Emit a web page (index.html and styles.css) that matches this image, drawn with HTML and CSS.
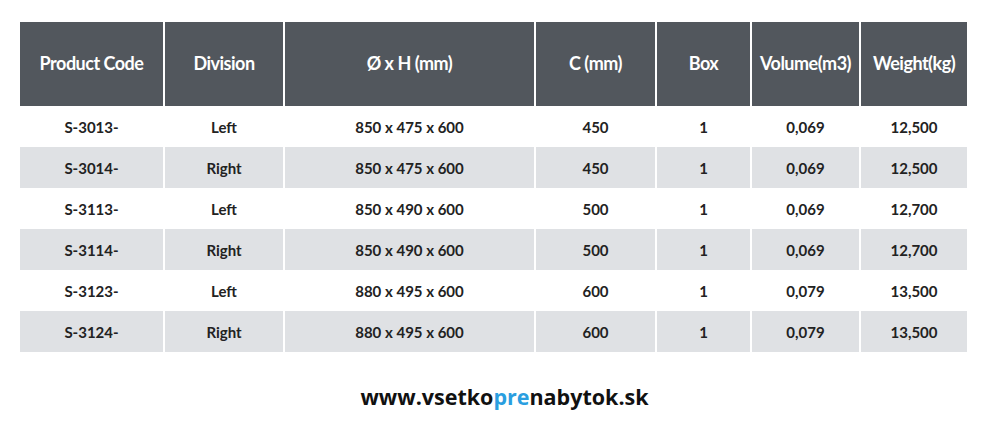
FILE: index.html
```html
<!DOCTYPE html>
<html>
<head>
<meta charset="utf-8">
<link rel="stylesheet" href="styles.css">
</head>
<body>
<div class="page">
  <table class="spec">
    <colgroup>
      <col class="c1"><col class="c2"><col class="c3"><col class="c4"><col class="c5"><col class="c6"><col class="c7">
    </colgroup>
    <thead>
      <tr>
        <th>Product Code</th>
        <th>Division</th>
        <th>Ø x H (mm)</th>
        <th>C (mm)</th>
        <th>Box</th>
        <th>Volume(m3)</th>
        <th>Weight(kg)</th>
      </tr>
    </thead>
    <tbody>
      <tr><td>S-3013-</td><td>Left</td><td>850 x 475 x 600</td><td>450</td><td>1</td><td>0,069</td><td>12,500</td></tr>
      <tr><td>S-3014-</td><td>Right</td><td>850 x 475 x 600</td><td>450</td><td>1</td><td>0,069</td><td>12,500</td></tr>
      <tr><td>S-3113-</td><td>Left</td><td>850 x 490 x 600</td><td>500</td><td>1</td><td>0,069</td><td>12,700</td></tr>
      <tr><td>S-3114-</td><td>Right</td><td>850 x 490 x 600</td><td>500</td><td>1</td><td>0,069</td><td>12,700</td></tr>
      <tr><td>S-3123-</td><td>Left</td><td>880 x 495 x 600</td><td>600</td><td>1</td><td>0,079</td><td>13,500</td></tr>
      <tr><td>S-3124-</td><td>Right</td><td>880 x 495 x 600</td><td>600</td><td>1</td><td>0,079</td><td>13,500</td></tr>
    </tbody>
  </table>
  <div class="site">www.vsetko<span class="accent">pre</span>nabytok.sk</div>
</div>
</body>
</html>
```

FILE: styles.css
```css
html, body {
  margin: 0;
  padding: 0;
  background: #ffffff;
}
.page {
  width: 1000px;
  height: 425px;
  padding-top: 22px;
  box-sizing: border-box;
}
.spec {
  margin-left: 20px;
  width: 947px;
  border-collapse: collapse;
  table-layout: fixed;
  font-family: Lato, "Liberation Sans", sans-serif;
  font-weight: 700;
}
.c1 { width: 144px; }
.c2 { width: 120px; }
.c3 { width: 251px; }
.c4 { width: 121px; }
.c5 { width: 95px; }
.c6 { width: 109px; }
.c7 { width: 107px; }
.spec th {
  background: #52575d;
  color: #ffffff;
  font-size: 18px;
  font-weight: 700;
  letter-spacing: -0.5px;
  height: 84px;
  padding: 0 0 3px 0;
  box-sizing: border-box;
  text-align: center;
  vertical-align: middle;
  border-left: 2px solid #ffffff;
  border-right: 2px solid #ffffff;
}
.spec th:first-child, .spec td:first-child { border-left: none; }
.spec th:last-child, .spec td:last-child { border-right: none; }
.spec td {
  height: 41px;
  padding: 0;
  text-align: center;
  vertical-align: middle;
  font-size: 15px;
  color: #222222;
  border-left: 2px solid #ffffff;
  border-right: 2px solid #ffffff;
}
.spec tbody tr:nth-child(even) td {
  background: #dfe1e4;
}
.site {
  margin-top: 32px;
  padding-left: 9px;
  text-align: center;
  font-family: "Open Sans", "DejaVu Sans", sans-serif;
  font-weight: 700;
  font-size: 21.5px;
  color: #111111;
  line-height: 26px;
}
.accent { color: #2a9ee0; }
```
